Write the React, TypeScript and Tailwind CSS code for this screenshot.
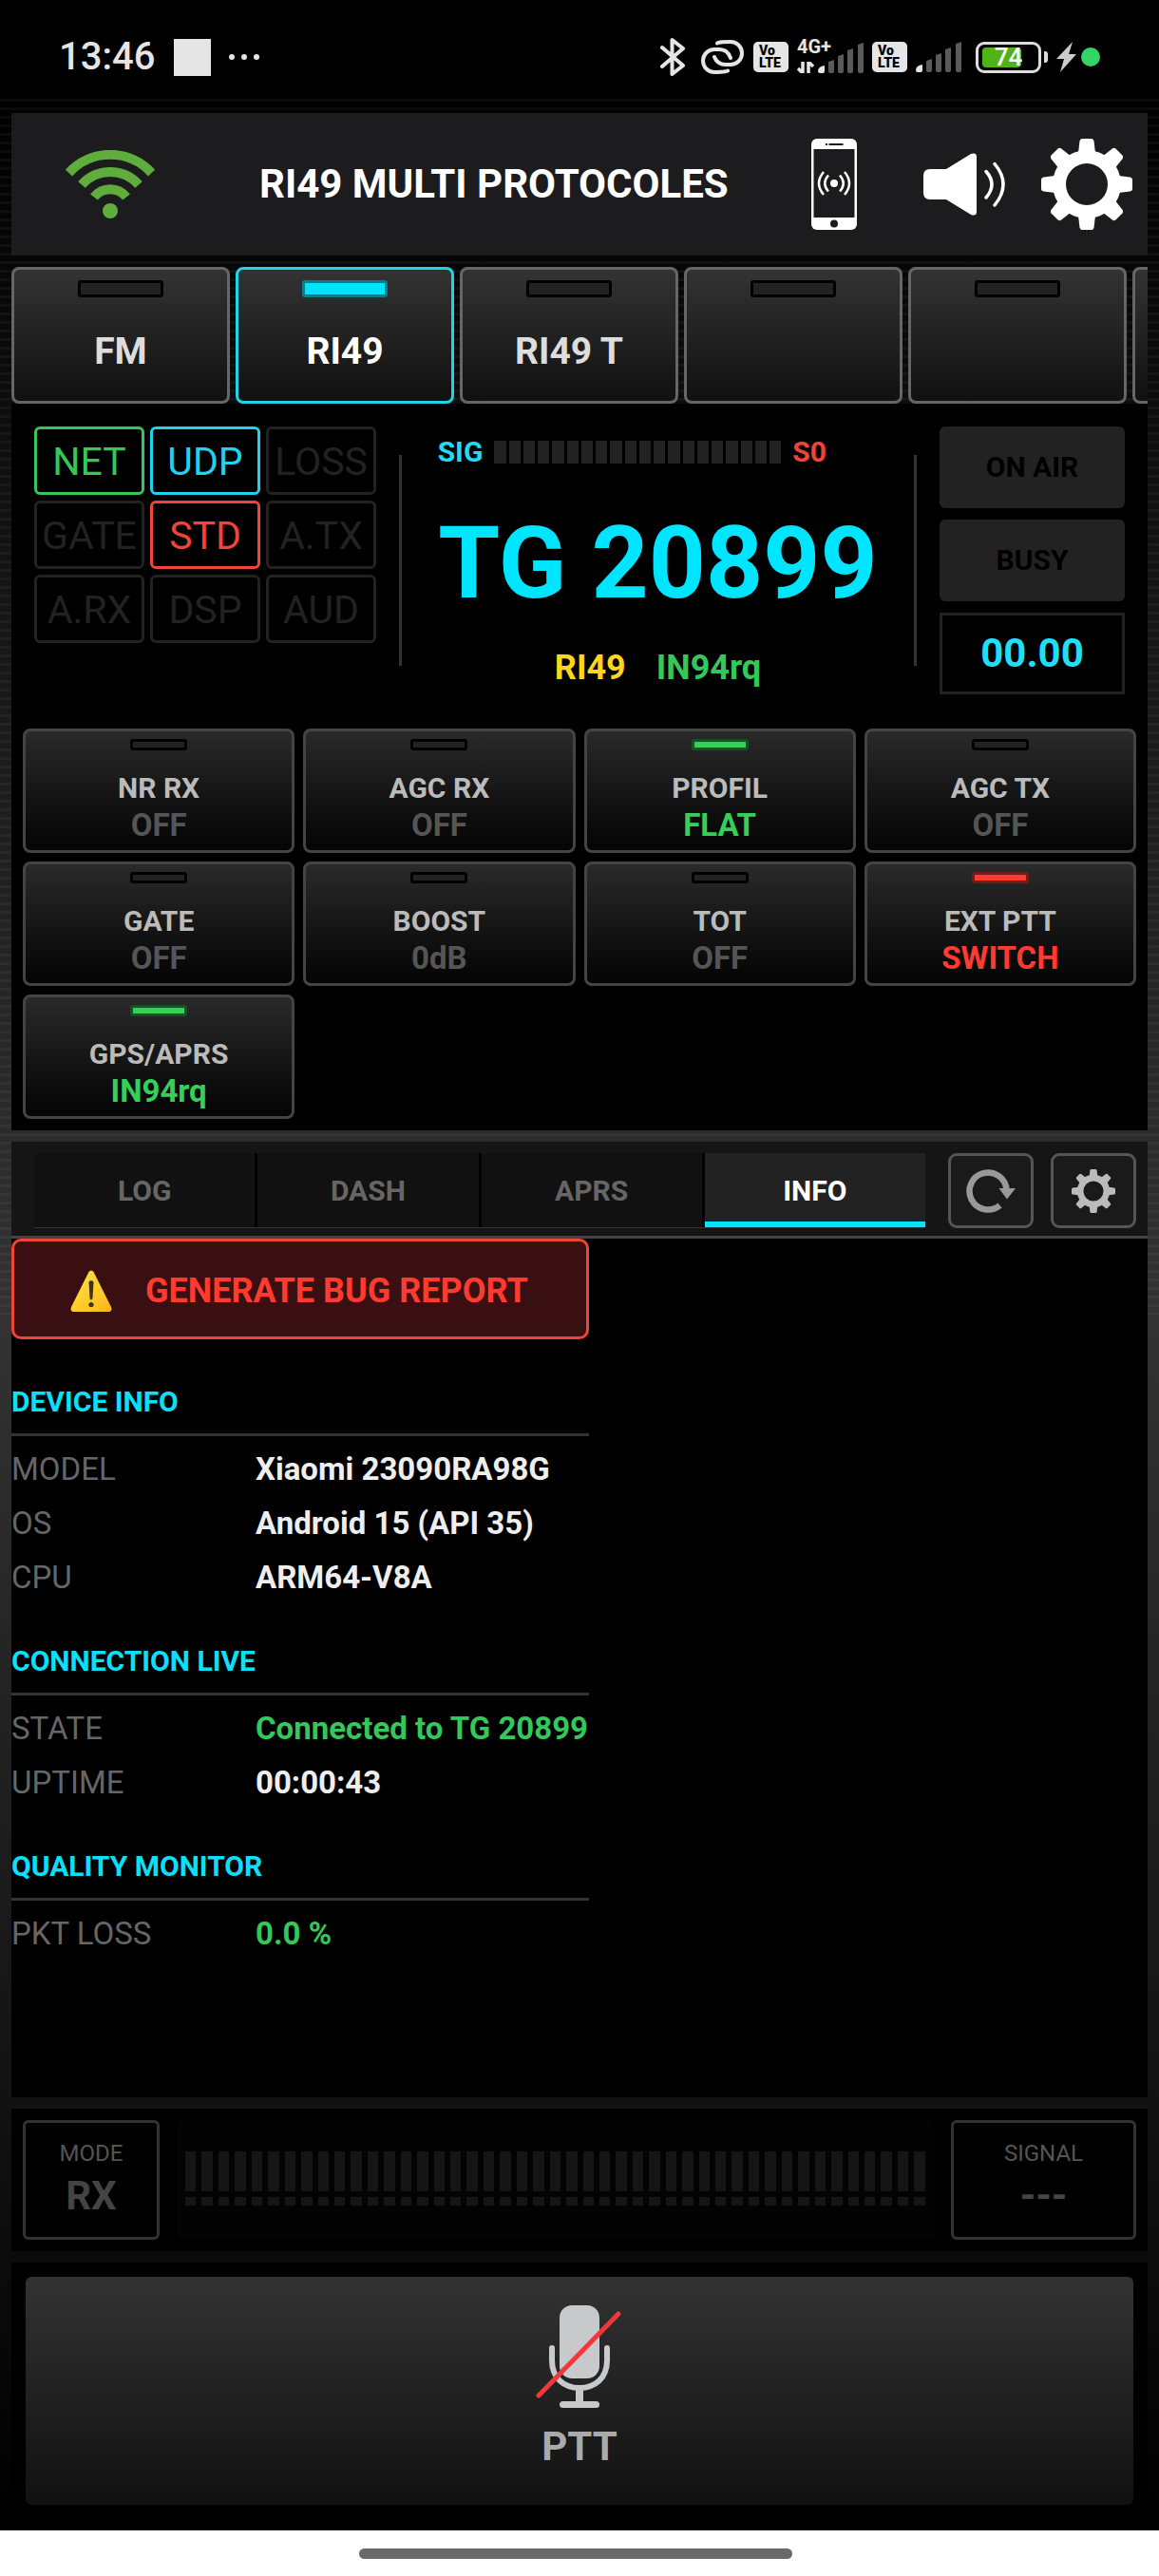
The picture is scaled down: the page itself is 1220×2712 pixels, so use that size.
import { useState } from "react";
import type { ReactNode } from "react";

const TEETH = [0, 45, 90, 135, 180, 225, 270, 315];

function GearIcon({ className }: { className: string }) {
  return (
    <svg viewBox="-48 -48 96 96" className={className} fill="currentColor" aria-hidden="true">
      <path
        fillRule="evenodd"
        d="M0-36a36 36 0 1 1 0 72a36 36 0 1 1 0-72zM0-22a22 22 0 1 0 0 44a22 22 0 1 0 0-44z"
      />
      {TEETH.map((a) => (
        <path key={a} transform={`rotate(${a})`} d="M-9-33L-7.500-45.500Q-7-48-5-48H5Q7-48 7.500-45.500L9-33z" />
      ))}
    </svg>
  );
}

function WifiIcon() {
  return (
    <svg viewBox="0 0 94 72" className="h-[72px] w-[94px]" fill="none" stroke="#5fad3d" strokeWidth="10" aria-hidden="true">
      <path d="M3.500 24A59 59 0 0 1 90.500 24" />
      <path d="M17 36.500A40 40 0 0 1 77 36.500" />
      <path d="M30 49.500A21.500 21.500 0 0 1 64 49.500" />
      <circle cx="47" cy="64" r="8" fill="#5fad3d" stroke="none" />
    </svg>
  );
}

function PhoneIcon() {
  return (
    <svg viewBox="0 0 48 96" className="h-24 w-12" fill="none" aria-hidden="true">
      <rect width="48" height="96" rx="6" fill="#fff" />
      <rect x="2.500" y="11" width="43" height="72" fill="#1c1c1e" />
      <path d="M15 6h2M18.500 6h15" stroke="#1c1c1e" strokeWidth="2" />
      <circle cx="24" cy="89.500" r="4" fill="#1c1c1e" />
      <circle cx="24" cy="47" r="4" fill="#fff" />
      <path
        d="M18 38.500Q10.500 47 18 55.500M13 35Q3 47 13 59M30 38.500Q37.500 47 30 55.500M35 35Q45 47 35 59"
        stroke="#fff"
        strokeWidth="2.500"
      />
    </svg>
  );
}

function SpeakerIcon() {
  return (
    <svg viewBox="0 0 86 66" className="h-[66px] w-[86px]" fill="none" aria-hidden="true">
      <path
        d="M7 17H24L50 1Q56-1 56 4V62Q56 67 50 65L24 49H7Q0 49 0 42V24Q0 17 7 17z"
        fill="#fff"
      />
      <path d="M66 19.500Q78 33 66 47M75 11.500Q93 33 75 55" stroke="#fff" strokeWidth="3.500" strokeLinecap="round" />
    </svg>
  );
}

function RefreshIcon() {
  return (
    <svg viewBox="0 0 52 46" className="h-[46px] w-[52px]" fill="none" aria-hidden="true">
      <path d="M42.500 22A19.500 19.500 0 1 0 35.500 38" stroke="#999" strokeWidth="6.500" />
      <path d="M34.500 20H52L43 31.500z" fill="#999" />
    </svg>
  );
}

function MutedMicIcon() {
  return (
    <svg viewBox="0 0 92 108" className="h-[108px] w-[92px]" fill="none" aria-hidden="true">
      <rect x="25" width="42" height="77" rx="13" fill="#c8c9ca" />
      <path d="M17 45V58C17 77 30 87 46 87S75 77 75 58V45" stroke="#c8c9ca" strokeWidth="6" strokeLinecap="round" />
      <path d="M42 87h8v15h-8z" fill="#c8c9ca" />
      <rect x="25" y="101" width="42" height="7" rx="3.500" fill="#c8c9ca" />
      <path d="M3 95L87 9" stroke="#f0383c" strokeWidth="5" strokeLinecap="round" />
    </svg>
  );
}

function WarningIcon() {
  return (
    <svg viewBox="0 0 44 44" className="h-11 w-11" aria-hidden="true">
      <defs>
        <linearGradient id="warn" x1="0" y1="0" x2="1" y2="1">
          <stop offset="0" stopColor="#ffe14d" />
          <stop offset="0.600" stopColor="#ffca28" />
          <stop offset="1" stopColor="#f9b51c" />
        </linearGradient>
      </defs>
      <path d="M19.500 2Q22-1 24.500 2L43 39Q44.500 44 40 44H4Q-0.500 44 1 39z" fill="url(#warn)" />
      <path d="M19.500 12.500Q22 9.500 24.500 12.500L23.500 30Q22 33 20.500 30z" fill="#3b3320" />
      <circle cx="22" cy="36.500" r="2.600" fill="#3b3320" />
    </svg>
  );
}

function VoLte() {
  return (
    <span className="flex h-8 w-[37px] flex-col justify-center rounded-[5px] bg-[#e5e5e5] pl-1.5 text-[14px] leading-[13px] font-black text-black">
      <span>Vo</span>
      <span>LTE</span>
    </span>
  );
}

function SignalBars() {
  return (
    <svg viewBox="0 0 48 32" className="h-8 w-12" aria-hidden="true">
      <path d="M0 30Q0 25 7 24V30Q7 32 5 32H2Q0 32 0 30z" fill="#e5e5e5" />
      <g fill="#5a5a5a">
        <path d="M11 20l6-2v12q0 2-2 2h-2q-2 0-2-2z" />
        <path d="M21 14l6-2v18q0 2-2 2h-2q-2 0-2-2z" />
        <path d="M31 8l6-2v24q0 2-2 2h-2q-2 0-2-2z" />
        <path d="M42 2l6-2v30q0 2-2 2h-2q-2 0-2-2z" />
      </g>
    </svg>
  );
}

function StatusBar() {
  return (
    <div className="flex h-[104px] items-center bg-black pt-4 pr-[62px] pl-[62px]">
      <span className="text-[40px] leading-[48px] font-medium text-[#e5e5e5]">13:46</span>
      <span className="ml-5 h-[39px] w-[39px] bg-[#e5e5e5]" />
      <span className="ml-[19px] flex gap-[7px]">
        <span className="h-1.5 w-1.5 rounded-full bg-[#e5e5e5]" />
        <span className="h-1.5 w-1.5 rounded-full bg-[#e5e5e5]" />
        <span className="h-1.5 w-1.5 rounded-full bg-[#e5e5e5]" />
      </span>
      <div className="ml-auto flex items-center gap-[9px]">
        <svg viewBox="0 0 27 42" className="mr-1.5 h-[42px] w-[27px]" fill="none" stroke="#e5e5e5" strokeWidth="4" aria-hidden="true">
          <path d="M2 11L24 30L12.500 39V3L24 12L2 31" strokeLinejoin="round" strokeLinecap="round" />
        </svg>
        <svg viewBox="0 0 47 36" className="h-9 w-[47px]" fill="none" stroke="#e5e5e5" strokeWidth="4" strokeLinecap="round" aria-hidden="true">
          <path d="M29 32.500Q26 34 15 34A12 12 0 0 1 15 10H20A12 12 0 0 1 32 19" />
          <path d="M18 3.500Q21 2 32 2A12 12 0 0 1 32 26H27A12 12 0 0 1 15 18" />
        </svg>
        <VoLte />
        <span className="relative flex h-[34px] w-[70px] items-end justify-end">
          <span className="absolute -top-1 left-0 text-[20px] leading-5 font-bold text-[#e5e5e5]">4G+</span>
          <svg viewBox="0 0 18 12" className="absolute bottom-0 left-0 h-3 w-[18px]" fill="none" stroke="#e5e5e5" strokeWidth="3.500" aria-hidden="true">
            <path d="M6 0V12L1 7M12 12V0L17 5" />
          </svg>
          <SignalBars />
        </span>
        <VoLte />
        <SignalBars />
        <span className="ml-1.5 flex items-center gap-[3px]">
          <span className="relative flex h-[33px] w-[69px] items-center justify-center rounded-[9px] border-[3px] border-[#ddd]">
            <span className="absolute top-[3px] bottom-[3px] left-1 w-[41px] rounded-[4px] bg-[#4fb315]" />
            <span className="relative text-[26px] leading-[27px] font-medium text-white">74</span>
          </span>
          <span className="h-3 w-1 rounded-r-[3px] bg-[#ddd]" />
        </span>
        <svg viewBox="0 0 21 32" className="h-8 w-[21px]" fill="#ccc" aria-hidden="true">
          <path d="M17 0L0 18H8L4 32L21 13H13z" />
        </svg>
        <span className="-ml-1 h-5 w-5 rounded-full bg-[#34d466]" />
      </div>
    </div>
  );
}

const PRESETS = ["FM", "RI49", "RI49 T", "", "", ""];

function Preset({ label, active, onPick, index }: { label: string; active: boolean; onPick: () => void; index: number }) {
  return (
    <button
      type="button"
      aria-label={label || `Preset ${index + 1}`}
      onClick={onPick}
      className={`flex h-36 w-[230px] shrink-0 flex-col items-center rounded-lg border-[3px] bg-linear-to-b from-[#333] to-[#111] pt-[11px] ${
        active ? "border-[#1fd3e8] text-white" : "border-[#666] text-[#ddd]"
      }`}
    >
      <span
        className={`h-[18px] w-[90px] rounded-[3px] border-[3px] ${
          active ? "border-[#0b7f8c] bg-[#00e5ff]" : "border-black bg-[#222]"
        }`}
      />
      <span className="mt-9 text-[39px] leading-[42px] font-bold">{label}</span>
    </button>
  );
}

const BADGES = [
  ["NET", "border-[#34c759] text-[#34c759]"],
  ["UDP", "border-[#1fd3f0] text-[#1fd3f0]"],
  ["LOSS", "border-[#222] text-[#222]"],
  ["GATE", "border-[#222] text-[#222]"],
  ["STD", "border-[#f04438] text-[#f04438]"],
  ["A.TX", "border-[#222] text-[#222]"],
  ["A.RX", "border-[#222] text-[#222]"],
  ["DSP", "border-[#222] text-[#222]"],
  ["AUD", "border-[#222] text-[#222]"],
];

const OFF_LED = "border-black bg-[#222]";
const GREEN_LED = "border-[#175227] bg-[#34d058]";
const RED_LED = "border-[#731c17] bg-[#ff3b30]";

const FUNCTIONS = [
  ["NR RX", "OFF", OFF_LED, "text-[#555]"],
  ["AGC RX", "OFF", OFF_LED, "text-[#555]"],
  ["PROFIL", "FLAT", GREEN_LED, "text-[#34d058]"],
  ["AGC TX", "OFF", OFF_LED, "text-[#555]"],
  ["GATE", "OFF", OFF_LED, "text-[#555]"],
  ["BOOST", "0dB", OFF_LED, "text-[#555]"],
  ["TOT", "OFF", OFF_LED, "text-[#555]"],
  ["EXT PTT", "SWITCH", RED_LED, "text-[#ff3b30]"],
  ["GPS/APRS", "IN94rq", GREEN_LED, "text-[#34d058]"],
];

function Display() {
  return (
    <div className="flex px-6 pt-6">
      <div className="grid w-[360px] shrink-0 auto-rows-[72px] grid-cols-3 gap-1.5">
        {BADGES.map(([name, tone]) => (
          <span key={name} className={`flex items-center justify-center rounded-md border-[3px] pt-0.5 text-[41px] leading-[48px] ${tone}`}>
            {name}
          </span>
        ))}
      </div>
      <div className="ml-6 h-[222px] w-[3px] self-center bg-[#333]" />
      <div className="flex flex-1 flex-col items-center pt-[9px] font-bold">
        <div className="flex items-center gap-3 text-[30px] leading-9">
          <span className="text-[#1fdcf2]">SIG</span>
          <span className="flex h-6 w-[302px] gap-[3px]">
            {Array.from({ length: 20 }, (_, i) => (
              <span key={i} className="flex-1 bg-[#222]" />
            ))}
          </span>
          <span className="w-[90px] text-[#f04438]">S0</span>
        </div>
        <div className="mt-10 text-[105px] leading-[120px] whitespace-nowrap text-[#00e5ff]">TG 20899</div>
        <div className="mt-7 flex gap-8 text-[36px] leading-[42px]">
          <span className="text-[#ffd61f]">RI49</span>
          <span className="text-[#34c759]">IN94rq</span>
        </div>
      </div>
      <div className="h-[222px] w-[3px] self-center bg-[#333]" />
      <div className="ml-6 flex w-[195px] shrink-0 flex-col gap-3 text-center text-[30px] font-bold text-black">
        <span className="rounded-md bg-[#222] leading-[86px]">ON AIR</span>
        <span className="rounded-md bg-[#222] leading-[86px]">BUSY</span>
        <span className="border-[3px] border-[#222] text-[42px] leading-[80px] text-[#1fdff5]">00.00</span>
      </div>
    </div>
  );
}

function Section({ title, children }: { title: string; children: ReactNode }) {
  return (
    <section className="mb-[42px]">
      <h2 className="border-b-[3px] border-[#333] pb-[15px] text-[30px] leading-9 font-bold text-[#0be0fa]">{title}</h2>
      <dl className="pt-1.5">{children}</dl>
    </section>
  );
}

function Row({ label, value, tone = "text-[#eee]" }: { label: string; value: string; tone?: string }) {
  return (
    <div className="flex text-[33px] leading-[57px] whitespace-nowrap">
      <dt className="w-[257px] shrink-0 text-[#666]">{label}</dt>
      <dd className={`font-bold ${tone}`}>{value}</dd>
    </div>
  );
}

const TABS = ["LOG", "DASH", "APRS", "INFO"];

export default function App() {
  const [preset, setPreset] = useState(1);
  const [tab, setTab] = useState("INFO");
  return (
    <div className="flex min-h-screen flex-col bg-black font-[Roboto,sans-serif]">
      <StatusBar />
      <div className="flex flex-1 flex-col gap-3 [background:repeating-linear-gradient(to_bottom,#ffffff0a_0_3px,transparent_3px_9px)_top/100%_50%_no-repeat,linear-gradient(to_bottom,#000,#333_50%,#000)] px-3 pt-[15px]">
        <header className="flex h-[150px] items-center bg-[#1c1c1e] pr-4 pl-[57px]">
          <WifiIcon />
          <h1 className="ml-[110px] text-[42px] leading-[48px] font-bold whitespace-nowrap text-white">RI49 MULTI PROTOCOLES</h1>
          <div className="ml-auto flex items-center">
            <button type="button" aria-label="Phone audio">
              <PhoneIcon />
            </button>
            <button type="button" aria-label="Volume" className="mr-[38px] ml-[70px]">
              <SpeakerIcon />
            </button>
            <button type="button" aria-label="Settings">
              <GearIcon className="h-24 w-24 text-white" />
            </button>
          </div>
        </header>

        <main className="flex flex-1 flex-col gap-3">
          <div>
            <nav className="flex gap-1.5 overflow-hidden" aria-label="Presets">
              {PRESETS.map((p, i) => (
                <Preset key={i} index={i} label={p} active={preset === i} onPick={() => setPreset(i)} />
              ))}
            </nav>
            <div className="bg-black pb-3">
              <Display />
              <div className="mt-9 grid auto-rows-[131px] grid-cols-4 gap-[9px] px-3">
                {FUNCTIONS.map(([name, value, led, tone]) => (
                  <button
                    type="button"
                    key={name}
                    className="flex flex-col items-center rounded-lg border-[3px] border-[#444] bg-linear-to-b from-[#2a2a2a] to-[#050505] pt-2 font-bold"
                  >
                    <span className={`h-3 w-[60px] rounded-[3px] border-[3px] ${led}`} />
                    <span className="mt-[22px] text-[30px] leading-9 text-[#bbb]">{name}</span>
                    <span className={`text-[33px] leading-[42px] ${tone}`}>{value}</span>
                  </button>
                ))}
              </div>
            </div>
          </div>

          <div className="flex flex-1 flex-col bg-black">
            <div className="flex border-b-[3px] border-[#444] bg-[#151515] pt-3 pr-3 pb-2 pl-6">
              <div role="tablist" className="flex h-[79px] flex-1 border-b border-[#333]">
                {TABS.map((t) => (
                  <button
                    type="button"
                    role="tab"
                    aria-selected={tab === t}
                    key={t}
                    onClick={() => setTab(t)}
                    className={`flex-1 border-r-[3px] text-[30px] font-bold last:border-r-0 ${
                      tab === t
                        ? "border-black border-b-[6px] border-b-[#00e5ff] bg-[#222] pt-1.5 text-white"
                        : "border-black bg-[#111] text-[#666]"
                    }`}
                  >
                    {t}
                  </button>
                ))}
              </div>
              <div className="ml-6 flex gap-[18px]">
                <button type="button" aria-label="Refresh" className="flex h-[79px] w-[90px] items-center justify-center rounded-[9px] border-[3px] border-[#555] bg-[#1a1a1a]">
                  <RefreshIcon />
                </button>
                <button type="button" aria-label="Panel settings" className="flex h-[79px] w-[90px] items-center justify-center rounded-[9px] border-[3px] border-[#555] bg-[#1a1a1a]">
                  <GearIcon className="h-[46px] w-[46px] text-[#bbb]" />
                </button>
              </div>
            </div>
            <div className="w-[608px] max-w-full">
              <button
                type="button"
                className="mb-12 flex h-[106px] w-full items-center rounded-[10px] border-[3px] border-[#f04438] bg-[#3a0f11] pt-1 pl-[59px] text-[36px] leading-[42px] font-bold text-[#ff3b30]"
              >
                <WarningIcon />
                <span className="ml-[35px]">GENERATE BUG REPORT</span>
              </button>
              <Section title="DEVICE INFO">
                <Row label="MODEL" value="Xiaomi 23090RA98G" />
                <Row label="OS" value="Android 15 (API 35)" />
                <Row label="CPU" value="ARM64-V8A" />
              </Section>
              <Section title="CONNECTION LIVE">
                <Row label="STATE" value="Connected to TG 20899" tone="text-[#34c759]" />
                <Row label="UPTIME" value="00:00:43" />
              </Section>
              <Section title="QUALITY MONITOR">
                <Row label="PKT LOSS" value="0.0 %" tone="text-[#34c759]" />
              </Section>
            </div>
          </div>

          <div className="flex h-[150px] gap-[18px] bg-black p-3">
            <div className="flex w-36 flex-col items-center rounded-md border-[3px] border-[#333] pt-[17px]">
              <span className="text-[24px] leading-[30px] text-[#555]">MODE</span>
              <span className="mt-1.5 text-[42px] leading-[48px] font-bold text-[#444]">RX</span>
            </div>
            <div className="flex flex-1 flex-col justify-center rounded-md bg-[#030303] px-[9px] pb-[3px]">
              <div className="flex h-[42px] gap-1.5">
                {Array.from({ length: 45 }, (_, i) => (
                  <span key={i} className="flex-1 bg-[#151515]" />
                ))}
              </div>
              <div className="mt-1.5 flex h-[9px] gap-1.5">
                {Array.from({ length: 45 }, (_, i) => (
                  <span key={i} className="flex-1 bg-[#151515]" />
                ))}
              </div>
            </div>
            <div className="flex w-[195px] flex-col items-center rounded-md border-[3px] border-[#333] pt-[17px]">
              <span className="text-[24px] leading-[30px] text-[#555]">SIGNAL</span>
              <span className="mt-1.5 text-[42px] leading-[48px] font-bold text-[#444]">---</span>
            </div>
          </div>

          <div className="bg-black px-[15px] pt-[15px] pb-[27px]">
            <button
              type="button"
              className="flex h-60 w-full flex-col items-center rounded-md bg-linear-to-b from-[#333] to-[#111] pt-[30px] text-[#aaa]"
            >
              <MutedMicIcon />
              <span className="mt-[17px] text-[42px] leading-[48px] font-bold">PTT</span>
            </button>
          </div>
        </main>
      </div>
      <footer className="flex h-12 items-center justify-center bg-white pr-2">
        <span className="h-[11px] w-[456px] rounded-full bg-[#696969]" />
      </footer>
    </div>
  );
}
